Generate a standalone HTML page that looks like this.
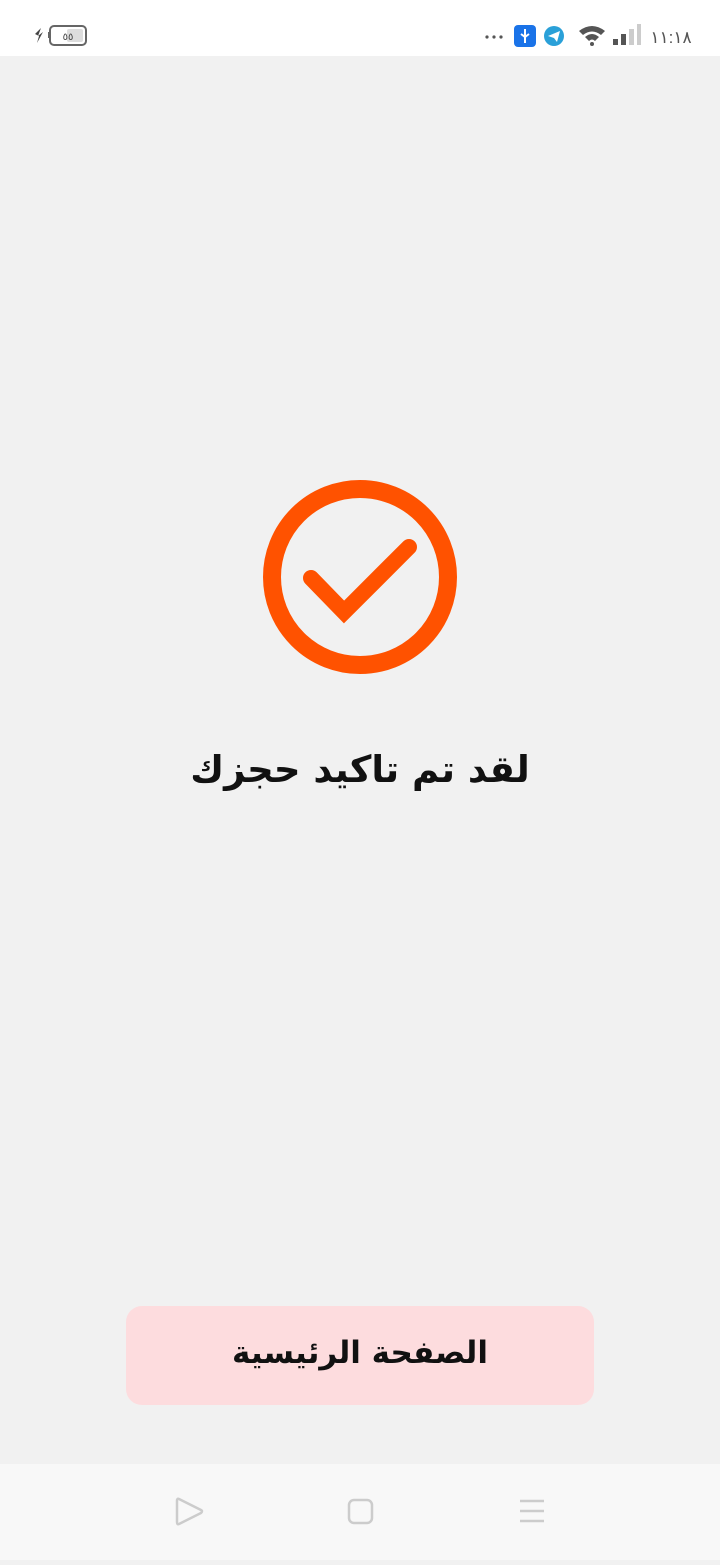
<!DOCTYPE html>
<html><head><meta charset="utf-8"><style>
body{margin:0;width:720px;height:1560px;background:#f1f1f1;position:relative;overflow:hidden;font-family:"Liberation Sans","DejaVu Sans",sans-serif}
.sb{position:absolute;top:0;left:0;width:720px;height:56px;background:#fff}
.nav{position:absolute;top:1464px;left:0;width:720px;height:96px;background:#f8f8f8}
.t{position:absolute;left:0;width:720px;text-align:center;direction:rtl;font-weight:bold;color:#111;font-family:"DejaVu Sans",sans-serif}
.btn{position:absolute;left:126px;top:1306px;width:468px;height:99px;background:#fddcde;border-radius:16px}
</style></head><body>
<div class="sb">
<svg width="720" height="56" style="position:absolute;left:0;top:0">
<path d="M35 34 L41 28 L38 36 L43 32 L37 43 L39 36 Z" fill="#444"/>
<rect x="50" y="26" width="36" height="19" rx="4" fill="none" stroke="#666" stroke-width="2"/>
<rect x="48" y="32" width="2" height="6" fill="#666"/>
<rect x="67" y="29" width="16" height="13" rx="2" fill="#ddd"/>
<text x="68" y="40" font-size="10" fill="#444" text-anchor="middle">٥٥</text>
<circle cx="487" cy="37" r="1.6" fill="#555"/><circle cx="494" cy="37" r="1.6" fill="#555"/><circle cx="501" cy="37" r="1.6" fill="#555"/>
<rect x="514" y="25" width="22" height="22" rx="4" fill="#1a73e8"/>
<path d="M525 29 V43 M521 34 L525 37 L529 34" stroke="#fff" stroke-width="2" fill="none"/>
<circle cx="554" cy="36" r="10" fill="#2aa0d8"/>
<path d="M548 36 L560 31 L557 42 L554 38 Z" fill="#fff"/>
<path d="M579 31 Q592 21 605 31 L601 35 Q592 28 583 35 Z M585 37 Q592 31 599 37 L595 41 Q592 38 589 41 Z" fill="#555"/>
<circle cx="592" cy="44" r="2" fill="#555"/>
<rect x="613" y="39" width="5" height="6" fill="#555"/><rect x="621" y="34" width="5" height="11" fill="#555"/><rect x="629" y="29" width="5" height="16" fill="#ccc"/><rect x="637" y="24" width="4" height="21" fill="#ccc"/>
<text x="671" y="43" font-size="17" fill="#555" text-anchor="middle">١١:١٨</text>
</svg>
</div>
<svg width="720" height="700" style="position:absolute;left:0;top:0">
<circle cx="360" cy="577" r="88" fill="none" stroke="#ff5200" stroke-width="18"/>
<path d="M311 578 L344 612 L409 547" fill="none" stroke="#ff5200" stroke-width="16" stroke-linecap="round" stroke-linejoin="miter"/>
</svg>
<div class="t" style="top:748px;font-size:37px">لقد تم تاكيد حجزك</div>
<div class="btn"></div>
<div class="t" style="top:1335px;font-size:31px">الصفحة الرئيسية</div>
<div class="nav">
<svg width="720" height="96">
<path d="M179 35 L201 46 Q203 47 201 49 L179 60 Q177 61 177 58 L177 37 Q177 34 179 35 Z" fill="none" stroke="#ccc" stroke-width="2.5"/>
<rect x="349" y="36" width="23" height="23" rx="5" fill="none" stroke="#ccc" stroke-width="2.5"/>
<path d="M520 37 H544 M520 47 H544 M520 57 H544" stroke="#ccc" stroke-width="2.5"/>
</svg>
</div>
</body></html>
